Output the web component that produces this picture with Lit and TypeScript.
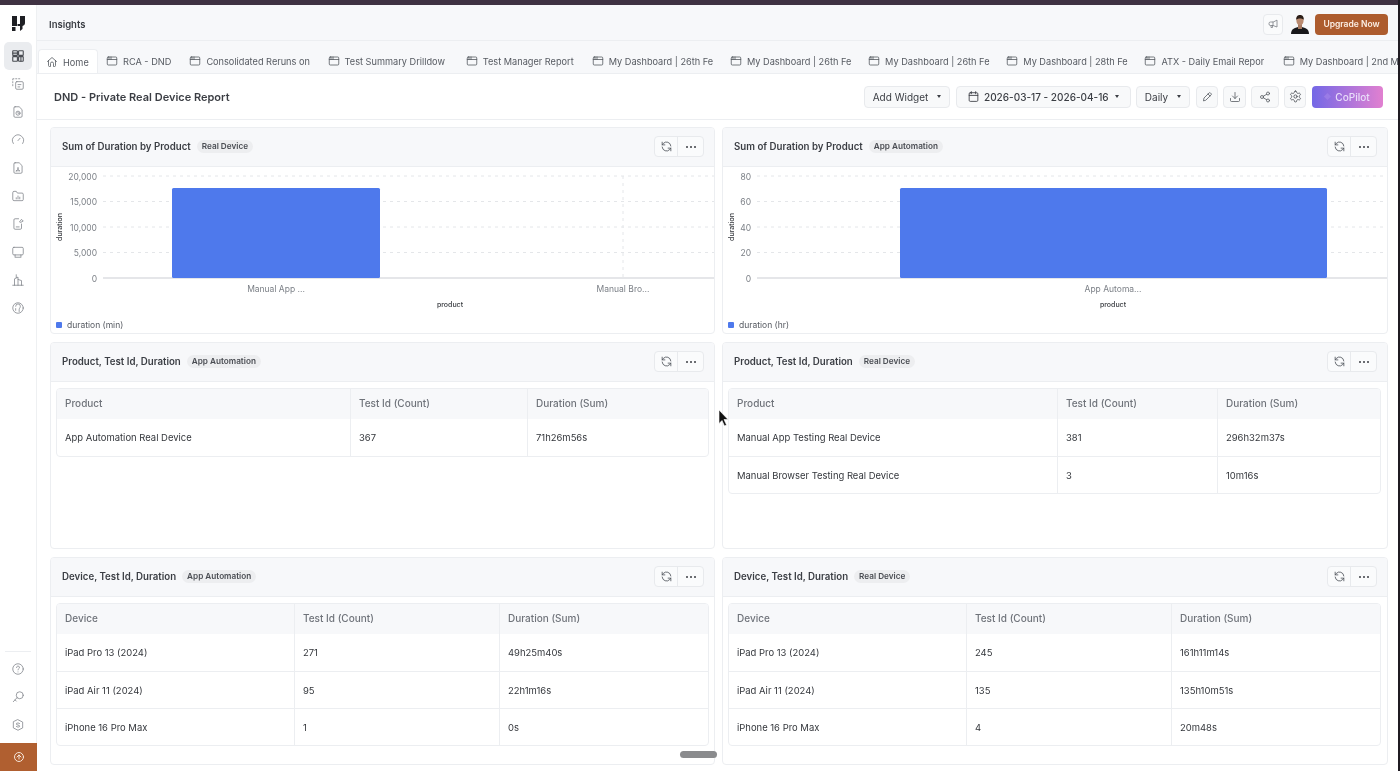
import {LitElement, css, html, svg} from 'lit';
import {customElement, property} from 'lit/decorators.js';

const stroke = (body: unknown, size = 12, w = 1.6) => html`<svg width="${size}" height="${size}" viewBox="0 0 24 24" fill="none" stroke="currentColor" stroke-width="${w}" stroke-linecap="round" stroke-linejoin="round">${body}</svg>`;

const icons = {
    grid: svg`<rect x="3" y="3" width="8" height="8" rx=".8"/><rect x="13" y="3" width="8" height="8" rx=".8"/><rect x="3" y="13" width="8" height="8" rx=".8"/><rect x="13" y="13" width="8" height="8" rx=".8"/><path d="M3 7h8M17 13v8"/>`,
    dashed: svg`<path d="M3 5V3h2M8 3h2M13 3h2M3 8v2M3 13v2" /><rect x="8" y="8" width="13" height="13" rx="2"/><path d="M12 13h5M12 17h3"/>`,
    fileClock: svg`<path d="M7 3h7l5 5v11a2 2 0 0 1-2 2H7a2 2 0 0 1-2-2V5a2 2 0 0 1 2-2z"/><circle cx="12" cy="14" r="3.500"/><path d="M12 12.500V14l1 1"/>`,
    gauge: svg`<path d="M4 18a9.500 9.500 0 1 1 16 0"/><path d="M12 13l3.500-4"/>`,
    filePdf: svg`<path d="M7 3h7l5 5v11a2 2 0 0 1-2 2H7a2 2 0 0 1-2-2V5a2 2 0 0 1 2-2z"/><path d="M9 17c2-1 3-3 3-6 0 3 1 5 3 6-2-.5-4-.5-6 0z"/>`,
    folderChart: svg`<path d="M3 6a2 2 0 0 1 2-2h4l2 3h8a2 2 0 0 1 2 2v9a2 2 0 0 1-2 2H5a2 2 0 0 1-2-2z"/><path d="M9 17v-2M12 17v-5M15 17v-3"/>`,
    fileShare: svg`<path d="M13 3H7a2 2 0 0 0-2 2v14a2 2 0 0 0 2 2h9a2 2 0 0 0 2-2v-7"/><path d="M15 8l3-4 3 3-4 2z"/><path d="M9 17h5"/>`,
    monitor: svg`<rect x="3" y="4" width="18" height="13" rx="2"/><path d="M8 21h8M7 17v4M17 17v4"/>`,
    building: svg`<path d="M3 21h18M6 21V10l6-3v14M12 11l6 2v8"/><path d="M9 3v5"/>`,
    support: svg`<circle cx="12" cy="12" r="9"/><path d="M8 9a4 4 0 0 1 8 0c0 3-2 3-2 6v3M8 13v3"/>`,
    help: svg`<circle cx="12" cy="12" r="9"/><path d="M9.500 9.500a2.500 2.500 0 1 1 3.600 2.200c-.8.4-1.100 1-1.100 1.800"/><path d="M12 17h.01"/>`,
    key: svg`<circle cx="15" cy="9" r="6"/><path d="M10.500 13L4 20M7 17l2 2"/>`,
    shield: svg`<path d="M12 3l8 4v10l-8 4-8-4V7z"/><path d="M15 9.500c-1-1.500-6-1.500-6 .8s6 1.400 6 3.600-5 2.200-6 .6"/>`,
    upgrade: svg`<circle cx="12" cy="12" r="9"/><path d="M8 12l4-4 4 4M12 8v8"/>`,
    home: svg`<path d="M3 11l9-8 9 8"/><path d="M5 9v10a2 2 0 0 0 2 2h2v-6a3 3 0 0 1 6 0v6h2a2 2 0 0 0 2-2V9"/>`,
    browser: svg`<rect x="2.500" y="4" width="19" height="16" rx="2"/><path d="M2.500 9h19M6 4v5M10 4v5"/>`,
    megaphone: svg`<path d="M20 5v13l-8-3H7a3 3 0 0 1-3-3v-1a3 3 0 0 1 3-3h5z"/><path d="M8 15v4h3v-4M12 8v7"/>`,
    calendar: svg`<rect x="4" y="5" width="16" height="16" rx="2"/><path d="M4 10h16M8 3v4M16 3v4"/>`,
    pencil: svg`<path d="M5 19l1-5L16 4a2 2 0 0 1 3 0l1 1a2 2 0 0 1 0 3L10 18z"/><path d="M14 6l4 4"/>`,
    download: svg`<path d="M12 3v12M7 10l5 5 5-5"/><path d="M3 15v4a2 2 0 0 0 2 2h14a2 2 0 0 0 2-2v-4"/>`,
    share: svg`<circle cx="18" cy="5" r="3"/><circle cx="6" cy="12" r="3"/><circle cx="18" cy="19" r="3"/><path d="M8.600 10.500l6.800-4M8.600 13.500l6.800 4"/>`,
    gear: svg`<path d="M12.220 2h-.44a2 2 0 0 0-2 2v.18a2 2 0 0 1-1 1.730l-.43.250a2 2 0 0 1-2 0l-.15-.08a2 2 0 0 0-2.730.730l-.22.380a2 2 0 0 0 .730 2.730l.15.100a2 2 0 0 1 1 1.720v.510a2 2 0 0 1-1 1.740l-.15.090a2 2 0 0 0-.730 2.730l.22.380a2 2 0 0 0 2.730.730l.15-.08a2 2 0 0 1 2 0l.43.250a2 2 0 0 1 1 1.730V20a2 2 0 0 0 2 2h.44a2 2 0 0 0 2-2v-.18a2 2 0 0 1 1-1.730l.43-.25a2 2 0 0 1 2 0l.15.080a2 2 0 0 0 2.730-.73l.22-.39a2 2 0 0 0-.73-2.730l-.15-.08a2 2 0 0 1-1-1.740v-.5a2 2 0 0 1 1-1.740l.15-.09a2 2 0 0 0 .73-2.730l-.22-.38a2 2 0 0 0-2.730-.73l-.15.080a2 2 0 0 1-2 0l-.43-.25a2 2 0 0 1-1-1.730V4a2 2 0 0 0-2-2z"/><circle cx="12" cy="12" r="3"/>`,
    refresh: svg`<path d="M20 11A8 8 0 0 0 6 6.500L4 9M4 13a8 8 0 0 0 14 4.500l2-2.500"/><path d="M4 4v5h5M20 20v-5h-5"/>`,
};

const sideTop = [icons.dashed, icons.fileClock, icons.gauge, icons.filePdf, icons.folderChart, icons.fileShare, icons.monitor, icons.building, icons.support];
const sideBottom = [icons.help, icons.key, icons.shield];
// tab labels stop where the tab bar cuts them
const tabs = [
    {name: 'RCA - DND'},
    {name: 'Consolidated Reruns on', long: true},
    {name: 'Test Summary Drilldow', long: true},
    {name: 'Test Manager Report'},
    {name: 'My Dashboard | 26th Fe', long: true},
    {name: 'My Dashboard | 26th Fe', long: true},
    {name: 'My Dashboard | 26th Fe', long: true},
    {name: 'My Dashboard | 28th Fe', long: true},
    {name: 'ATX - Daily Email Repor', long: true},
    {name: 'My Dashboard | 2nd M', long: true},
];

const W = 665;
const baseY = 111;
const plotH = 102;

@customElement('bar-chart')
export class BarChart extends LitElement {
    @property({type: Number}) max = 100;
    @property({type: Number}) step = 20;
    @property({type: Number}) left = 53;
    @property({type: Array}) bars: Array<any> = [];
    @property() legend = '';
    @property({type: Number}) productX = 400;
    @property({type: Number}) tickX = 0;

    static override styles = css`
      :host { display: block; height: 166px; }
      svg { display: block; font-family: "Inter", sans-serif; }
      .tick { font-size: 8.5px; fill: #7c8087; text-anchor: end; }
      .cat { font-size: 8.5px; fill: #7c8087; text-anchor: middle; }
      .axis { font-size: 7px; font-weight: 500; fill: #33363b; text-anchor: middle; }
      .legend { font-size: 8.5px; fill: #555960; }
    `;

    override render() {
        const ticks = [];
        for (let v = 0; v <= this.max; v += this.step) ticks.push(v);
        return html`<svg width="${W}" height="166" viewBox="0 0 ${W} 166">
            ${ticks.map(v => {
                const y = baseY - v / this.max * plotH;
                return svg`
                    <line x1="${this.left}" x2="${W}" y1="${y}" y2="${y}" stroke="${v ? '#e4e6e9' : '#dcdee2'}" stroke-width="${v ? 1 : 1.5}" stroke-dasharray="${v ? '3 4' : 'none'}"/>
                    <text class="tick" x="${this.left - 6}" y="${y + 3.5}">${v.toLocaleString('en-US')}</text>`;
            })}
            ${this.bars.map(b => svg`
                ${b.grid ? svg`<line x1="${b.grid}" x2="${b.grid}" y1="9" y2="${baseY}" stroke="#e4e6e9" stroke-dasharray="3 4"/>` : ''}
                ${b.value ? svg`<rect x="${b.x}" y="${baseY - b.value / this.max * plotH}" width="${b.w}" height="${b.value / this.max * plotH}" rx="1.500" fill="#4e79ec"/>` : ''}
                <text class="cat" x="${b.cx}" y="125">${b.label}</text>`)}
            <text class="axis" x="${this.productX}" y="140">product</text>
            <text class="axis" transform="translate(${this.tickX} 60) rotate(-90)">duration</text>
            <rect x="5" y="155" width="6" height="6" rx="1" fill="#4e79ec"/>
            <text class="legend" x="16" y="161">${this.legend}</text>
        </svg>`;
    }
}

@customElement('data-table')
export class DataTable extends LitElement {
    @property({type: Array}) columns: Array<string> = [];
    @property({type: Array}) widths: Array<number> = [];
    @property({type: Array}) rows: Array<Array<string>> = [];

    static override styles = css`
      :host { display: block; width: 653px; box-sizing: border-box; margin: 6px 5px 0; border: 1px solid #eceef1; border-radius: 4px; overflow: hidden; font-family: "Inter", sans-serif; font-size: 9.45px; background: #fff; }
      .row { display: grid; height: 37px; align-items: center; border-top: 1px solid #eceef1; color: #33363b; box-sizing: border-box; }
      .row.head { height: 30px; border-top: 0; background: #f7f8fa; color: #6f737a; font-size: 10px; font-weight: 500; }
      .row.head .cell { padding-bottom: 2px; box-sizing: border-box; }
      .row:nth-child(2) { border-top: 0; }
      .cell { padding-left: 8px; height: 100%; display: flex; align-items: center; border-left: 1px solid #eceef1; }
      .cell:first-child { border-left: 0; }
    `;

    override render() {
        const cols = this.widths.map(w => `${w}px`).join(' ');
        return html`
            <div class="row head" style="grid-template-columns:${cols}">
                ${this.columns.map(c => html`<div class="cell">${c}</div>`)}
            </div>
            ${this.rows.map(r => html`
                <div class="row" style="grid-template-columns:${cols}">
                    ${r.map(c => html`<div class="cell">${c}</div>`)}
                </div>`)}
        `;
    }
}

@customElement('app-root')
export class AppRoot extends LitElement {
    static override styles = css`
      :host { display: block; position: relative; width: 1400px; height: 771px; overflow: hidden; font-family: "Inter", sans-serif; color: #33363b; background: #fff; filter: blur(0.35px); }
      .topline { height: 5px; background: #3f3242; }
      .edge { position: absolute; top: 0; right: 0; bottom: 0; width: 2px; background: #1f1b22; }
      .shell { display: flex; height: 766px; }

      .side { width: 37px; flex: none; box-sizing: border-box; border-right: 1px solid #eef0f2; display: flex; flex-direction: column; align-items: center; background: #fff; }
      .logo { height: 37px; display: flex; align-items: center; justify-content: center; flex: none; }
      .nav { display: flex; flex-direction: column; align-items: center; color: #7c8087; }
      .nav span { width: 28px; height: 28px; display: flex; align-items: center; justify-content: center; }
      .nav .on { background: #eaecef; border-radius: 5px; color: #4a4d53; }
      .nav.low { margin-bottom: 4px; }
      .spacer { flex: 1; }
      .divider { width: 26px; height: 1px; background: #eceef1; margin-bottom: 3px; }
      .up { align-self: stretch; height: 28px; background: #b05f30; color: #f6e6da; display: flex; align-items: center; justify-content: center; margin-right: -1px; }

      .main { flex: 1; min-width: 0; margin-right: 2px; display: flex; flex-direction: column; }
      .header { height: 36px; flex: none; box-sizing: border-box; border-bottom: 1px solid #eceef1; background: #f7f8fa; display: flex; align-items: center; padding: 3px 10px 0 12px; }
      .header b { font-size: 9.5px; font-weight: 600; color: #3b3e44; flex: 1; }
      .bell { width: 20px; height: 21px; box-sizing: border-box; border: 1px solid #e8eaed; border-radius: 4px; background: #fafbfc; color: #7c8087; display: flex; align-items: center; justify-content: center; }
      .avatar { margin: 0 6px 0 8px; display: block; }
      .upgrade { height: 21px; width: 73px; border-radius: 4px; background: #ad5c2e; color: #fbeee4; font-size: 8.5px; font-weight: 600; display: flex; align-items: center; justify-content: center; }

      .tabs { height: 33px; flex: none; box-sizing: border-box; display: flex; padding: 8px 0 0 1px; background: #f7f8fa; border-bottom: 1px solid #eceef1; overflow: hidden; font-size: 9.2px; color: #565a61; white-space: nowrap; }
      .tab { display: flex; align-items: center; gap: 5px; flex: none; padding: 0 10px 0 8px; }
      .tab span { display: block; }
      .tab.long { padding-right: 9.2px; }
      .tab.long span { width: 104px; }
      .tab.home { background: #fff; border: 1px solid #eceef1; border-bottom: 0; border-radius: 4px 4px 0 0; padding: 0 8px 0 7px; width: 60px; box-sizing: border-box; margin-bottom: -1px; }

      .bar { height: 46px; flex: none; box-sizing: border-box; border-bottom: 1px solid #eceef1; display: flex; align-items: center; padding: 0 15px 0 17px; }
      .bar h1 { margin: 0; flex: 1; font-size: 11px; font-weight: 600; color: #3b3e44; }
      .btn { height: 22px; box-sizing: border-box; border: 1px solid #e8eaed; border-radius: 4px; background: #f8f9fa; display: flex; align-items: center; justify-content: center; font-size: 10px; color: #3b3e44; margin-left: 5px; }
      .caret { width: 0; height: 0; border-left: 2.5px solid transparent; border-right: 2.5px solid transparent; border-top: 3px solid #3b3e44; }
      .add { width: 86px; gap: 9px; }
      .date { width: 175px; gap: 4px; font-weight: 500; margin-left: 6px; justify-content: flex-start; padding-left: 10px; }
      .date .caret { margin-left: 2px; }
      .daily { width: 54px; gap: 9px; }
      .ico { width: 22px; color: #565a61; }
      .ico.first { margin-left: 6px; }
      .ico.mid { width: 23px; }
      .ico.wide { width: 28px; }
      .copilot { width: 71px; height: 22px; border-radius: 4px; background: linear-gradient(90deg, #7468e6, #e180d0); color: #e9defa; font-size: 10px; font-weight: 500; display: flex; align-items: center; justify-content: center; gap: 5px; margin-left: 6px; }
      .copilot i { width: 5px; height: 5px; background: #9a7ce6; transform: rotate(45deg); }

      .grid { flex: 1; display: grid; grid-template-columns: 665px 666px; grid-template-rows: 207px 207px 208px; column-gap: 7px; row-gap: 8px; padding: 7px 0 0 13px; }
      .card { border: 1px solid #eceef1; border-radius: 4px; box-sizing: border-box; overflow: hidden; background: #fff; }
      .chead { height: 39px; box-sizing: border-box; background: #f7f8fa; border-bottom: 1px solid #eceef1; display: flex; align-items: center; padding: 0 10px 1px 11px; }
      .chead b { font-size: 9.7px; font-weight: 600; color: #3b3e44; }
      .tag { margin-left: 6px; padding: 0 5px; height: 13px; line-height: 13px; border-radius: 7px; background: #edeef0; color: #4a4d53; font-size: 8.2px; font-weight: 600; }
      .acts { margin-left: auto; display: flex; height: 21px; border: 1px solid #e8eaed; border-radius: 4px; background: #fafbfc; box-sizing: border-box; color: #565a61; }
      .acts span { width: 22px; display: flex; align-items: center; justify-content: center; }
      .acts span + span { width: 25px; border-left: 1px solid #e8eaed; }
      .dots { display: flex; gap: 2px; }
      .dots i { width: 2px; height: 2px; border-radius: 50%; background: #3b3e44; }

      .thumb { position: absolute; left: 680px; top: 751px; width: 37px; height: 7px; border-radius: 4px; background: #8a8b8d; }
      .cursor { position: absolute; left: 718px; top: 410px; }
    `;

    card(title: string, tag: string, body: unknown) {
        return html`<section class="card">
            <div class="chead">
                <b>${title}</b><span class="tag">${tag}</span>
                <div class="acts">
                    <span>${stroke(icons.refresh, 13)}</span>
                    <span><div class="dots"><i></i><i></i><i></i></div></span>
                </div>
            </div>
            ${body}
        </section>`;
    }

    table(columns: string[], widths: number[], rows: string[][]) {
        return html`<data-table .columns=${columns} .widths=${widths} .rows=${rows}></data-table>`;
    }

    override render() {
        const product = ['Product', 'Test Id (Count)', 'Duration (Sum)'];
        const device = ['Device', 'Test Id (Count)', 'Duration (Sum)'];
        return html`
            <div class="topline"></div>
            <div class="shell">
                <aside class="side">
                    <div class="logo">
                        <svg width="13" height="15" viewBox="0 0 13 15" fill="#1e1f24"><path d="M0 0h5v10H0zM0 11h3.500v4H0zM8 0h5v7c0 1.500-1 2.500-2.500 3v3L8 15v-5H5.500V8H8z"/></svg>
                    </div>
                    <div class="nav">
                        <span class="on">${stroke(icons.grid, 14, 1.9)}</span>
                        ${sideTop.map(i => html`<span>${stroke(i, 14, 1.3)}</span>`)}
                    </div>
                    <div class="spacer"></div>
                    <div class="divider"></div>
                    <div class="nav low">
                        ${sideBottom.map(i => html`<span>${stroke(i, 14, 1.3)}</span>`)}
                    </div>
                    <div class="up">${stroke(icons.upgrade, 12, 2)}</div>
                </aside>
                <div class="main">
                    <header class="header">
                        <b>Insights</b>
                        <div class="bell">${stroke(icons.megaphone, 12)}</div>
                        <svg class="avatar" width="18" height="20" viewBox="0 0 18 20">
                            <path d="M0 20c0-5 4-7 9-7s9 2 9 7z" fill="#17171a"/>
                            <rect x="7" y="10" width="4" height="5" fill="#a87b62"/>
                            <ellipse cx="9" cy="6.500" rx="3.600" ry="5" fill="#b98a70"/>
                            <path d="M5.200 6C5 2 7 1 9 1s4 1 3.800 5c-1-2-6.600-2-7.600 0z" fill="#2a1d17"/>
                        </svg>
                        <div class="upgrade">Upgrade Now</div>
                    </header>
                    <nav class="tabs">
                        <div class="tab home">${stroke(icons.home)}<span>Home</span></div>
                        ${tabs.map(t => html`<div class="tab ${t.long ? 'long' : ''}">${stroke(icons.browser)}<span>${t.name}</span></div>`)}
                    </nav>
                    <div class="bar">
                        <h1>DND - Private Real Device Report</h1>
                        <div class="btn add">Add Widget <i class="caret"></i></div>
                        <div class="btn date">${stroke(icons.calendar, 13)} 2026-03-17 - 2026-04-16 <i class="caret"></i></div>
                        <div class="btn daily">Daily <i class="caret"></i></div>
                        <div class="btn ico first">${stroke(icons.pencil, 12)}</div>
                        <div class="btn ico mid">${stroke(icons.download, 12)}</div>
                        <div class="btn ico wide">${stroke(icons.share, 12)}</div>
                        <div class="btn ico">${stroke(icons.gear, 13, 1.7)}</div>
                        <div class="copilot"><i></i>CoPilot</div>
                    </div>
                    <main class="grid">
                        ${this.card('Sum of Duration by Product', 'Real Device', html`<bar-chart
                            .max=${20000} .step=${5000} .left=${52} .productX=${399} .tickX=${11} legend="duration (min)"
                            .bars=${[{x: 121, w: 208, value: 17650, cx: 225, label: 'Manual App ...'}, {value: 0, cx: 572, grid: 572, label: 'Manual Bro...'}]}></bar-chart>`)}
                        ${this.card('Sum of Duration by Product', 'App Automation', html`<bar-chart
                            .max=${80} .step=${20} .left=${34} .productX=${390} .tickX=${11} legend="duration (hr)"
                            .bars=${[{x: 177, w: 427, value: 70.6, cx: 390, label: 'App Automa...'}]}></bar-chart>`)}
                        ${this.card('Product, Test Id, Duration', 'App Automation', this.table(product, [293, 177, 181], [
                            ['App Automation Real Device', '367', '71h26m56s'],
                        ]))}
                        ${this.card('Product, Test Id, Duration', 'Real Device', this.table(product, [328, 160, 163], [
                            ['Manual App Testing Real Device', '381', '296h32m37s'],
                            ['Manual Browser Testing Real Device', '3', '10m16s'],
                        ]))}
                        ${this.card('Device, Test Id, Duration', 'App Automation', this.table(device, [237, 205, 209], [
                            ['iPad Pro 13 (2024)', '271', '49h25m40s'],
                            ['iPad Air 11 (2024)', '95', '22h1m16s'],
                            ['iPhone 16 Pro Max', '1', '0s'],
                        ]))}
                        ${this.card('Device, Test Id, Duration', 'Real Device', this.table(device, [237, 205, 209], [
                            ['iPad Pro 13 (2024)', '245', '161h11m14s'],
                            ['iPad Air 11 (2024)', '135', '135h10m51s'],
                            ['iPhone 16 Pro Max', '4', '20m48s'],
                        ]))}
                    </main>
                </div>
            </div>
            <div class="edge"></div>
            <div class="thumb"></div>
            <svg class="cursor" width="11" height="17" viewBox="0 0 11 17"><path d="M1 0l9 9.500H6l2.500 5.500-2 1L4 10.500 1 13.500z" fill="#111" stroke="#fff" stroke-width=".6"/></svg>
        `;
    }
}

declare global {
    interface HTMLElementTagNameMap {
        'app-root': AppRoot;
    }
}
